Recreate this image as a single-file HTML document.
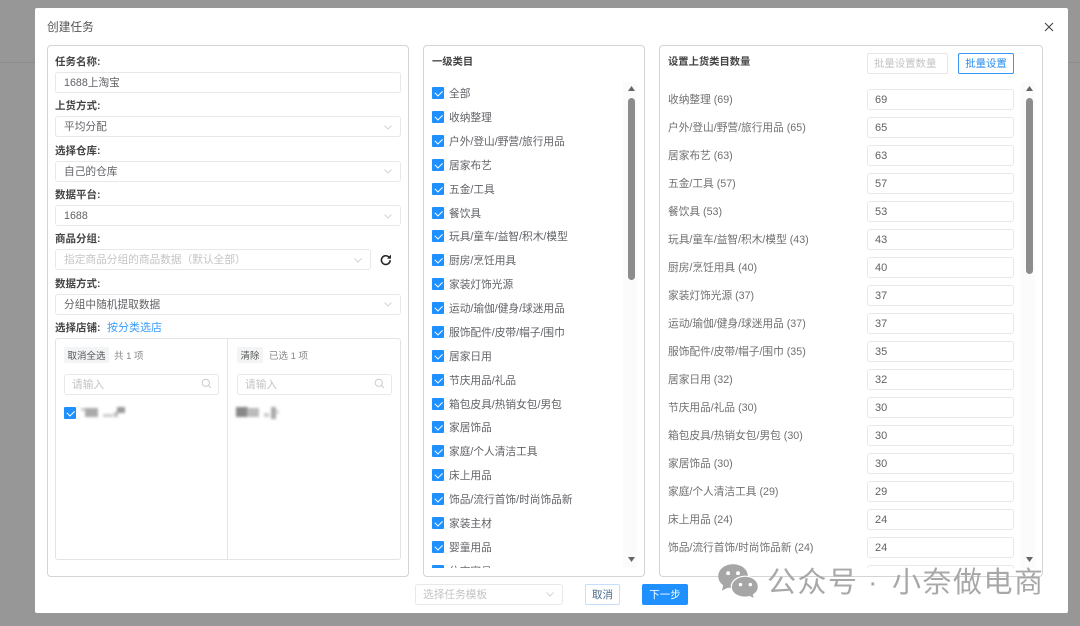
<!DOCTYPE html>
<html><head><meta charset="utf-8"><style>
*{box-sizing:border-box}
html,body{margin:0;padding:0;width:1080px;height:626px;overflow:hidden;background:#979797;font-family:"Liberation Sans","Noto Sans CJK SC",sans-serif;font-size:10.7px;color:#555}
#w{position:absolute;left:0;top:0;width:1080px;height:626px;filter:blur(.35px)}
.a{position:absolute}
.t{position:absolute;white-space:nowrap;line-height:14px;transform:translateY(2px)}
.panel{position:absolute;border:1px solid #d4d4d4;border-radius:4px;background:#fff}
.in{position:absolute;border:1px solid #e8e8e8;border-radius:3px;background:#fff;height:21px;line-height:21px;padding-left:8px;color:#606266;white-space:nowrap;font-size:10.7px}
.lb{position:absolute;left:55px;font-weight:bold;color:#444;line-height:14px;font-size:10.5px;white-space:nowrap;transform:translateY(1px)}
.ck{position:absolute;left:8px;width:12px;height:12px;background:#1e90ff;border-radius:1px}
.ck::after{content:"";position:absolute;left:3px;top:3px;width:6px;height:3.500px;border:solid #fff;border-width:0 0 1px 1px;transform:rotate(-45deg)}
.ci{position:absolute;left:25px;line-height:14px;white-space:nowrap;color:#606266;font-size:10.7px;transform:translateY(1px)}
.rl{position:absolute;left:8px;line-height:14px;white-space:nowrap;color:#707070;font-size:10.7px;transform:translateY(1px)}
.ri{position:absolute;left:207px;width:147px;height:21px;border:1px solid #e8e8e8;border-radius:3px;padding-left:7px;line-height:21px;color:#606266;font-size:11px}
.chev{position:absolute;width:12px;height:8px}
.clip{position:absolute;overflow:hidden}
.wm{position:absolute;white-space:nowrap;top:567px;font-size:29px;line-height:32px;color:#a8a8a8;letter-spacing:1.500px}
</style></head><body><div id="w">
<div class="a" style="left:0;top:62px;width:1080px;height:1px;background:#8c8c8c"></div>
<div class="a" style="left:35px;top:8px;width:1033px;height:605px;background:#fff;border-radius:2px"></div>
<div class="t" style="left:47px;top:19px;font-size:11.7px;color:#555">创建任务</div>
<svg class="a" style="left:1044px;top:22px" width="10" height="10" viewBox="0 0 10 10"><path d="M1 1L9 9M9 1L1 9" stroke="#444" stroke-width="1.100" fill="none"/></svg>

<div class="panel" style="left:47px;top:45px;width:362px;height:532px"></div>
<div class="lb" style="top:54px">任务名称:</div>
<div class="in" style="left:55px;top:72px;width:346px;">1688上淘宝</div>
<div class="lb" style="top:98px">上货方式:</div>
<div class="in" style="left:55px;top:116px;width:346px;">平均分配</div>
<div class="lb" style="top:143px">选择仓库:</div>
<div class="in" style="left:55px;top:161px;width:346px;">自己的仓库</div>
<div class="lb" style="top:187px">数据平台:</div>
<div class="in" style="left:55px;top:205px;width:346px;">1688</div>
<div class="lb" style="top:231px">商品分组:</div>
<div class="in" style="left:55px;top:249px;width:316px;color:#c4c4c4">指定商品分组的商品数据（默认全部）</div>
<div class="lb" style="top:276px">数据方式:</div>
<div class="in" style="left:55px;top:294px;width:346px;">分组中随机提取数据</div>
<svg class="chev" style="left:382px;top:123px" viewBox="0 0 12 8"><path d="M2.500 2.500L6 6L9.500 2.500" stroke="#d4d4d4" fill="none"/></svg>
<svg class="chev" style="left:382px;top:167px" viewBox="0 0 12 8"><path d="M2.500 2.500L6 6L9.500 2.500" stroke="#d4d4d4" fill="none"/></svg>
<svg class="chev" style="left:382px;top:212px" viewBox="0 0 12 8"><path d="M2.500 2.500L6 6L9.500 2.500" stroke="#d4d4d4" fill="none"/></svg>
<svg class="chev" style="left:352px;top:256px" viewBox="0 0 12 8"><path d="M2.500 2.500L6 6L9.500 2.500" stroke="#d4d4d4" fill="none"/></svg>
<svg class="chev" style="left:382px;top:300px" viewBox="0 0 12 8"><path d="M2.500 2.500L6 6L9.500 2.500" stroke="#d4d4d4" fill="none"/></svg>
<svg class="a" style="left:380px;top:254px" width="12" height="12" viewBox="0 0 12 12"><path d="M10.200 6.200A4.400 4.400 0 1 1 8.800 2.900" stroke="#222" stroke-width="1.500" fill="none"/><path d="M11 0.600V4.600H7Z" fill="#222"/></svg>
<div class="lb" style="top:320px">选择店铺:</div>
<div class="t" style="left:107px;top:319px;color:#3a9dfb;font-size:11px">按分类选店</div>

<div class="a" style="left:55px;top:338px;width:346px;height:222px;border:1px solid #e4e4e4;border-radius:3px"></div>
<div class="a" style="left:227px;top:339px;width:1px;height:220px;background:#e4e4e4"></div>
<div class="a" style="left:64px;top:347px;width:45px;height:16px;background:#f3f4f5;border-radius:2px;text-align:center;line-height:19px;font-size:9.500px;color:#555">取消全选</div>
<div class="t" style="left:114px;top:348px;font-size:9.500px;color:#888">共 1 项</div>
<div class="a" style="left:237px;top:347px;width:26px;height:16px;background:#f3f4f5;border-radius:2px;text-align:center;line-height:19px;font-size:9.500px;color:#555">清除</div>
<div class="t" style="left:269px;top:348px;font-size:9.500px;color:#888">已选 1 项</div>
<div class="in" style="left:64px;top:374px;width:155px;color:#c4c4c4;padding-left:7px">请输入</div>
<div class="in" style="left:237px;top:374px;width:155px;color:#c4c4c4;padding-left:7px">请输入</div>
<svg class="a" style="left:201px;top:378px" width="11" height="11" viewBox="0 0 11 11"><circle cx="4.800" cy="4.800" r="3.600" stroke="#ccc" fill="none"/><path d="M7.500 7.500L10 10" stroke="#ccc"/></svg>
<svg class="a" style="left:374px;top:378px" width="11" height="11" viewBox="0 0 11 11"><circle cx="4.800" cy="4.800" r="3.600" stroke="#ccc" fill="none"/><path d="M7.500 7.500L10 10" stroke="#ccc"/></svg>
<div class="ck" style="left:64px;top:407px"></div>
<svg class="a" style="left:80px;top:405px;filter:blur(1.200px)" width="48" height="14" viewBox="0 0 48 14"><rect x="1" y="3" width="5" height="3" fill="#ccc"/><rect x="5" y="3" width="13" height="9" fill="#aaa"/><rect x="23" y="9" width="10" height="3" fill="#ccc"/><rect x="34" y="7" width="4" height="5" fill="#bbb"/><rect x="37" y="2" width="8" height="6" fill="#999"/></svg>
<svg class="a" style="left:234px;top:406px;filter:blur(1.200px)" width="48" height="14" viewBox="0 0 48 14"><rect x="2" y="1" width="12" height="10" fill="#888"/><rect x="13" y="2" width="12" height="9" fill="#bbb"/><rect x="30" y="7" width="5" height="4" fill="#ccc"/><rect x="37" y="1" width="5" height="12" fill="#aaa"/><rect x="42" y="4" width="3" height="4" fill="#ddd"/></svg>

<!-- middle -->
<div class="panel" style="left:423px;top:45px;width:222px;height:532px;overflow:hidden">
<div class="t" style="left:8px;top:8px;color:#444;font-weight:bold;font-size:10.300px">一级类目</div>
<div class="clip" style="left:0;top:36px;width:200px;height:486px">
<div class="ck" style="top:5px"></div><div class="ci" style="top:4px">全部</div>
<div class="ck" style="top:29px"></div><div class="ci" style="top:28px">收纳整理</div>
<div class="ck" style="top:53px"></div><div class="ci" style="top:52px">户外/登山/野营/旅行用品</div>
<div class="ck" style="top:77px"></div><div class="ci" style="top:76px">居家布艺</div>
<div class="ck" style="top:101px"></div><div class="ci" style="top:100px">五金/工具</div>
<div class="ck" style="top:125px"></div><div class="ci" style="top:124px">餐饮具</div>
<div class="ck" style="top:148px"></div><div class="ci" style="top:147px">玩具/童车/益智/积木/模型</div>
<div class="ck" style="top:172px"></div><div class="ci" style="top:171px">厨房/烹饪用具</div>
<div class="ck" style="top:196px"></div><div class="ci" style="top:195px">家装灯饰光源</div>
<div class="ck" style="top:220px"></div><div class="ci" style="top:219px">运动/瑜伽/健身/球迷用品</div>
<div class="ck" style="top:244px"></div><div class="ci" style="top:243px">服饰配件/皮带/帽子/围巾</div>
<div class="ck" style="top:268px"></div><div class="ci" style="top:267px">居家日用</div>
<div class="ck" style="top:292px"></div><div class="ci" style="top:291px">节庆用品/礼品</div>
<div class="ck" style="top:316px"></div><div class="ci" style="top:315px">箱包皮具/热销女包/男包</div>
<div class="ck" style="top:339px"></div><div class="ci" style="top:338px">家居饰品</div>
<div class="ck" style="top:363px"></div><div class="ci" style="top:362px">家庭/个人清洁工具</div>
<div class="ck" style="top:387px"></div><div class="ci" style="top:386px">床上用品</div>
<div class="ck" style="top:411px"></div><div class="ci" style="top:410px">饰品/流行首饰/时尚饰品新</div>
<div class="ck" style="top:435px"></div><div class="ci" style="top:434px">家装主材</div>
<div class="ck" style="top:459px"></div><div class="ci" style="top:458px">婴童用品</div>
<div class="ck" style="top:483px"></div><div class="ci" style="top:482px">住宅家具</div>
</div>
<div class="a" style="left:199px;top:36px;width:14px;height:486px;background:#fbfbfb"></div>
<div class="a" style="left:204px;top:52px;width:7px;height:182px;background:#8c8c8c;border-radius:4px"></div>
<svg class="a" style="left:203px;top:39px" width="9" height="7" viewBox="0 0 9 7"><path d="M4.500 1L8 6H1Z" fill="#666"/></svg>
<svg class="a" style="left:203px;top:510px" width="9" height="7" viewBox="0 0 9 7"><path d="M4.500 6L8 1H1Z" fill="#666"/></svg>
</div>

<!-- right -->
<div class="panel" style="left:659px;top:45px;width:384px;height:532px;overflow:hidden">
<div class="t" style="left:8px;top:8px;color:#444;font-weight:bold;font-size:10.300px">设置上货类目数量</div>
<div class="a" style="left:207px;top:7px;width:81px;height:21px;border:1px solid #e6e6e6;border-radius:2px;padding-left:6px;line-height:21px;color:#c4c4c4;font-size:10.400px;white-space:nowrap">批量设置数量</div>
<div class="a" style="left:298px;top:7px;width:56px;height:21px;border:1px solid #3a94f5;border-radius:2px;text-align:center;line-height:21px;color:#2b8ef0;font-size:10.400px">批量设置</div>
<div class="clip" style="left:0;top:36px;width:360px;height:486px">
<div class="rl" style="top:10px">收纳整理 (69)</div><div class="ri" style="top:7px">69</div>
<div class="rl" style="top:38px">户外/登山/野营/旅行用品 (65)</div><div class="ri" style="top:35px">65</div>
<div class="rl" style="top:66px">居家布艺 (63)</div><div class="ri" style="top:63px">63</div>
<div class="rl" style="top:94px">五金/工具 (57)</div><div class="ri" style="top:91px">57</div>
<div class="rl" style="top:122px">餐饮具 (53)</div><div class="ri" style="top:119px">53</div>
<div class="rl" style="top:150px">玩具/童车/益智/积木/模型 (43)</div><div class="ri" style="top:147px">43</div>
<div class="rl" style="top:178px">厨房/烹饪用具 (40)</div><div class="ri" style="top:175px">40</div>
<div class="rl" style="top:206px">家装灯饰光源 (37)</div><div class="ri" style="top:203px">37</div>
<div class="rl" style="top:234px">运动/瑜伽/健身/球迷用品 (37)</div><div class="ri" style="top:231px">37</div>
<div class="rl" style="top:262px">服饰配件/皮带/帽子/围巾 (35)</div><div class="ri" style="top:259px">35</div>
<div class="rl" style="top:290px">居家日用 (32)</div><div class="ri" style="top:287px">32</div>
<div class="rl" style="top:318px">节庆用品/礼品 (30)</div><div class="ri" style="top:315px">30</div>
<div class="rl" style="top:346px">箱包皮具/热销女包/男包 (30)</div><div class="ri" style="top:343px">30</div>
<div class="rl" style="top:374px">家居饰品 (30)</div><div class="ri" style="top:371px">30</div>
<div class="rl" style="top:402px">家庭/个人清洁工具 (29)</div><div class="ri" style="top:399px">29</div>
<div class="rl" style="top:430px">床上用品 (24)</div><div class="ri" style="top:427px">24</div>
<div class="rl" style="top:458px">饰品/流行首饰/时尚饰品新 (24)</div><div class="ri" style="top:455px">24</div>
<div class="ri" style="top:483px"></div>
</div>
<div class="a" style="left:361px;top:36px;width:14px;height:486px;background:#fbfbfb"></div>
<div class="a" style="left:366px;top:52px;width:7px;height:176px;background:#8c8c8c;border-radius:4px"></div>
<svg class="a" style="left:365px;top:39px" width="9" height="7" viewBox="0 0 9 7"><path d="M4.500 1L8 6H1Z" fill="#666"/></svg>
<svg class="a" style="left:365px;top:510px" width="9" height="7" viewBox="0 0 9 7"><path d="M4.500 6L8 1H1Z" fill="#666"/></svg>
</div>

<!-- footer -->
<div class="in" style="left:415px;top:584px;width:148px;color:#c4c4c4;padding-left:7px">选择任务模板</div>
<svg class="chev" style="left:544px;top:590px" viewBox="0 0 12 8"><path d="M2.500 2.500L6 6L9.500 2.500" stroke="#d4d4d4" fill="none"/></svg>
<div class="a" style="left:585px;top:584px;width:35px;height:21px;border:1px solid #c6e0fb;border-radius:2px;text-align:center;line-height:21px;color:#4a6a8a;font-size:10.500px">取消</div>
<div class="a" style="left:642px;top:584px;width:46px;height:21px;background:#1e90ff;border-radius:2px;text-align:center;line-height:23px;color:#fff;font-size:10.500px">下一步</div>

<!-- watermark -->
<svg class="a" style="left:717px;top:563px" width="42" height="36" viewBox="0 0 34 30" preserveAspectRatio="none"><path d="M13 1C6 1 1 5.500 1 11C1 14.500 3 17 5 18.500L4 23L9 20.500C10 20.800 11 21 13 21C20 21 25 16.500 25 11C25 5.500 20 1 13 1Z" fill="#a6a6a6"/><circle cx="9" cy="8.500" r="1.600" fill="#fff"/><circle cx="17" cy="8.500" r="1.600" fill="#fff"/><path d="M23 11C16.500 11 11.500 15 11.500 20C11.500 25 16.500 28.500 23 28.500C24.500 28.500 25.500 28.300 26.500 28L30.500 30L29.500 26.500C31.800 25 33.500 22.800 33.500 20C33.500 15 29 11 23 11Z" fill="#a6a6a6" stroke="#fff" stroke-width="1"/><circle cx="19" cy="18" r="1.400" fill="#fff"/><circle cx="27" cy="18" r="1.400" fill="#fff"/></svg>
<div class="wm" style="left:767px">公众号</div>
<div class="wm" style="left:868px">·</div>
<div class="wm" style="left:892px">小奈做电商</div>
</div></body></html>
